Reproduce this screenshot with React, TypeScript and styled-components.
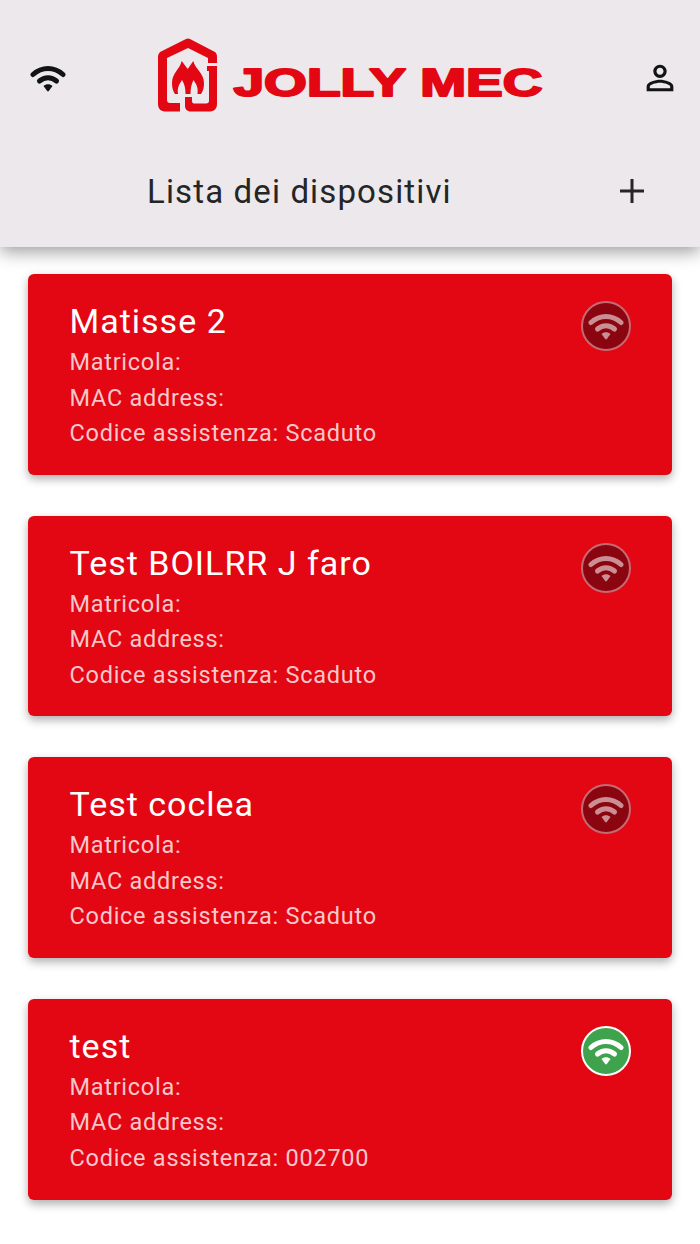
import React from 'react';
import styled, { createGlobalStyle } from 'styled-components';

const GlobalStyle = createGlobalStyle`
  html, body {
    margin: 0;
    padding: 0;
    background: #ffffff;
    font-family: Roboto, "Liberation Sans", sans-serif;
  }
`;

const Page = styled.div`
  width: 700px;
  height: 1244px;
  overflow: hidden;
  display: flex;
  flex-direction: column;
`;

const Header = styled.header`
  height: 247px;
  flex: none;
  background: #ece8eb;
  box-shadow: 0 5px 16px rgba(0, 0, 0, 0.38);
  display: flex;
  flex-direction: column;
  position: relative;
  z-index: 1;
`;

const TopBar = styled.div`
  display: flex;
  align-items: center;
  justify-content: space-between;
  height: 80px;
  margin-top: 38px;
  padding: 0 20px 0 30px;
`;

const TitleBar = styled.div`
  display: flex;
  align-items: center;
  justify-content: space-between;
  margin-top: 53px;
  height: 40px;
  padding: 0 56px 0 147px;
`;

const Title = styled.h1`
  margin: 0;
  font-size: 33px;
  font-weight: 400;
  letter-spacing: 1.13px;
  color: #252525;
`;

const List = styled.main`
  display: flex;
  flex-direction: column;
  gap: 41px;
  padding: 27px 28px 0;
`;

const Card = styled.article`
  height: 200.67px;
  box-sizing: border-box;
  padding: 25px 41px 0 41.5px;
  border-radius: 6px;
  background: #e30613;
  box-shadow: 0 4px 10px rgba(0, 0, 0, 0.32);
  display: flex;
  justify-content: space-between;
  align-items: flex-start;
`;

const CardBody = styled.div`
  display: flex;
  flex-direction: column;
`;

const DeviceName = styled.h2`
  margin: 0 0 2px;
  font-size: 34px;
  line-height: 44px;
  font-weight: 400;
  letter-spacing: 1px;
  color: #ffffff;
`;

const InfoLine = styled.div`
  font-size: 23.5px;
  line-height: 35.5px;
  letter-spacing: 0.73px;
  color: rgba(255, 255, 255, 0.78);
`;

const StatusBadge = styled.div<{ $online: boolean }>`
  width: 50px;
  height: 50px;
  margin-top: 2px;
  box-sizing: border-box;
  border-radius: 50%;
  display: flex;
  align-items: center;
  justify-content: center;
  color: #ffffff;
  background: ${(p) => (p.$online ? '#3fa34d' : '#8a0510')};
  border: 2px solid ${(p) => (p.$online ? '#ffffff' : '#c46a72')};
  & svg {
    opacity: ${(p) => (p.$online ? 1 : 0.55)};
  }
`;

const IconButton = styled.div`
  display: flex;
  align-items: center;
  justify-content: center;
  color: #111315;
`;

const LogoWrap = styled.div`
  display: flex;
  margin: 0 2px 4px 0;
`;

const LogoText = styled.text`
  font-family: "Liberation Sans", Arial, sans-serif;
  font-size: 38.5px;
  font-weight: 700;
  fill: #e30613;
  stroke: #e30613;
  stroke-width: 2px;
  stroke-linejoin: round;
`;

const WifiIcon = () => (
  <svg width="36" height="28" viewBox="0 0 36 28" fill="none">
    <path d="M3 10.5C12 2.5 24 2.5 33 10.5" stroke="currentColor" strokeWidth="5" strokeLinecap="round" />
    <path d="M9.5 17C14.5 12.7 21.5 12.7 26.5 17" stroke="currentColor" strokeWidth="5" strokeLinecap="round" />
    <path d="M13.5 22C16 19.8 20 19.8 22.5 22L18.8 27C18.4 27.5 17.6 27.5 17.2 27Z" fill="currentColor" />
  </svg>
);

const PersonIcon = () => (
  <svg width="40" height="40" viewBox="0 0 24 24" fill="currentColor">
    <path d="M12 5.9c1.16 0 2.1.94 2.1 2.1s-.94 2.1-2.1 2.1S9.9 9.16 9.9 8s.94-2.1 2.1-2.1m0 9c2.97 0 6.1 1.46 6.1 2.1v1.1H5.9V17c0-.64 3.13-2.1 6.1-2.1M12 4C9.79 4 8 5.79 8 8s1.79 4 4 4 4-1.79 4-4-1.79-4-4-4zm0 9c-2.67 0-8 1.34-8 4v3h16v-3c0-2.66-5.33-4-8-4z" />
  </svg>
);

const PlusIcon = () => (
  <svg width="24" height="24" viewBox="0 0 24 24" fill="none">
    <path d="M12 0V24M0 12H24" stroke="#252525" strokeWidth="3" />
  </svg>
);

const Logo = () => (
  <svg width="388" height="76" viewBox="0 0 388 76" fill="#e30613">
    {/* house */}
    <path d="M22 65V73.5H8C3 73.5 0 71 0 66V19C0 16 1.5 14.5 3 13.5L28 1C29.5 .3 30.5 .3 32 1L56 13.5C58 14.5 59 16 59 19V25H50V20L30 10L9 20V62C9 64 10 65 12 65Z" />
    {/* J */}
    <path d="M49 28H59V66C59 71 56 73.5 51 73.5H33C29 73.5 27 71 27 68V59H34V63C34 65 35 65.5 37 65.5H48C50 65.5 51 64.5 51 63V33H49Z" />
    {/* flames */}
    <path d="M23.7 23L29.7 31L35.3 23C37 31 46 35 46 45C46 50 45 53 43 56H39.5C40.5 49 38 46 35.5 42C33.5 46 32.5 50 32.5 56H27.5C27.5 50 26.5 46 24 42C21.5 46 19 49 20 56H17C15 53 14 50 14 45C14 35 22 31 23.7 23Z" />
    <LogoText x="75.5" y="58" textLength="309" lengthAdjust="spacingAndGlyphs">
      JOLLY MEC
    </LogoText>
  </svg>
);

const devices = [
  { name: 'Matisse 2', code: 'Scaduto', online: false },
  { name: 'Test BOILRR J faro', code: 'Scaduto', online: false },
  { name: 'Test coclea', code: 'Scaduto', online: false },
  { name: 'test', code: '002700', online: true },
];

const App: React.FC = () => {
  return (
    <Page>
      <GlobalStyle />
      <Header>
        <TopBar>
          <IconButton>
            <WifiIcon />
          </IconButton>
          <LogoWrap>
            <Logo />
          </LogoWrap>
          <IconButton>
            <PersonIcon />
          </IconButton>
        </TopBar>
        <TitleBar>
          <Title>Lista dei dispositivi</Title>
          <IconButton>
            <PlusIcon />
          </IconButton>
        </TitleBar>
      </Header>
      <List>
        {devices.map((d) => (
          <Card key={d.name}>
            <CardBody>
              <DeviceName>{d.name}</DeviceName>
              <InfoLine>Matricola:</InfoLine>
              <InfoLine>MAC address:</InfoLine>
              <InfoLine>Codice assistenza: {d.code}</InfoLine>
            </CardBody>
            <StatusBadge $online={d.online}>
              <WifiIcon />
            </StatusBadge>
          </Card>
        ))}
      </List>
    </Page>
  );
};

export default App;
